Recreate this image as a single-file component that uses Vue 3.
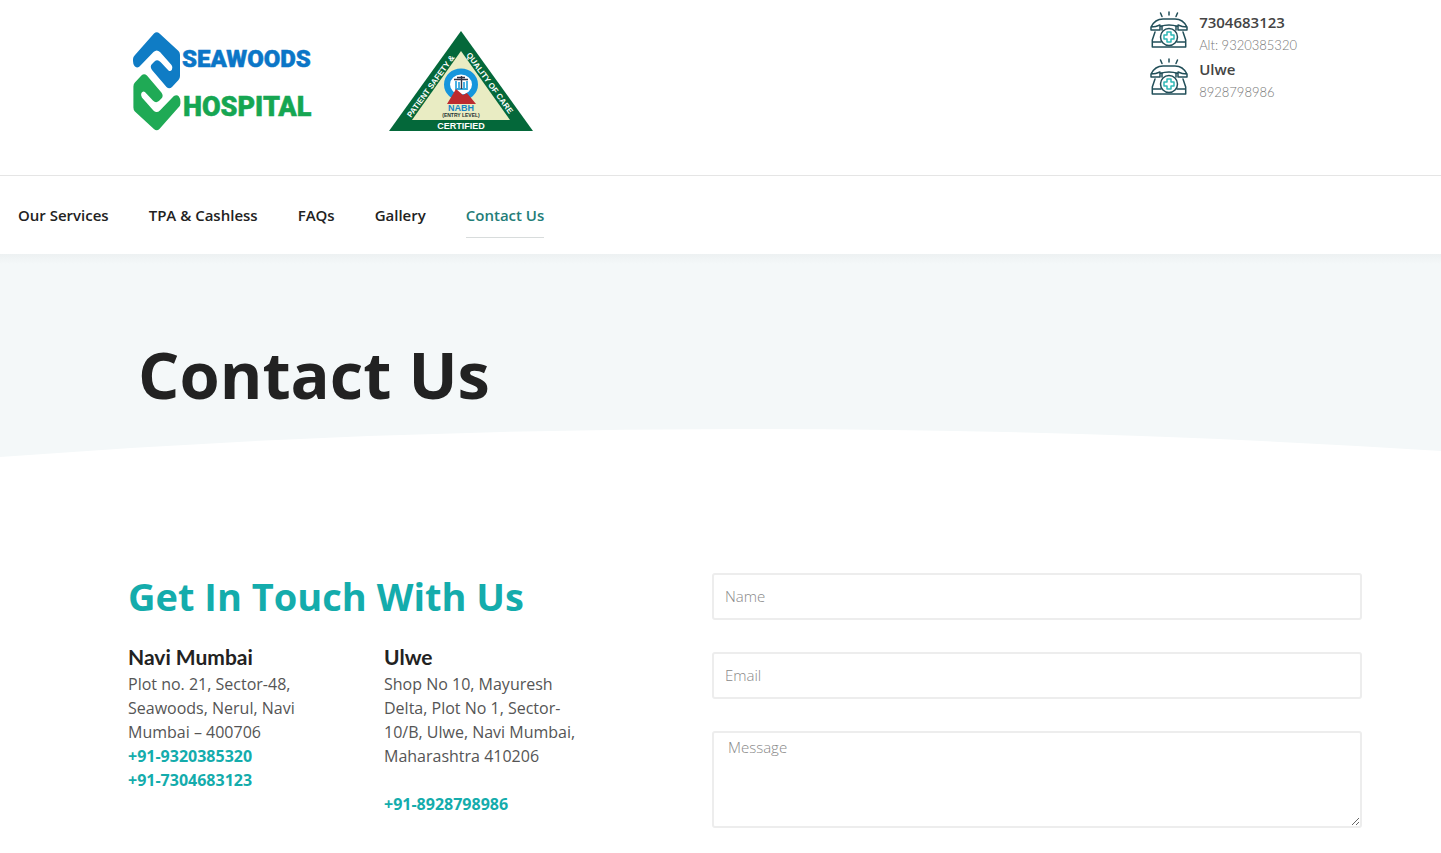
<script setup>
const nav = ['Our Services', 'TPA & Cashless', 'FAQs', 'Gallery', 'Contact Us']
const phones = [
  { title: '7304683123', note: 'Alt: 9320385320' },
  { title: 'Ulwe', note: '8928798986' },
]
const offices = [
  {
    city: 'Navi Mumbai',
    address: 'Plot no. 21, Sector-48, Seawoods, Nerul, Navi Mumbai – 400706',
    numbers: ['+91-9320385320', '+91-7304683123'],
  },
  {
    city: 'Ulwe',
    address: 'Shop No 10, Mayuresh Delta, Plot No 1, Sector-10/B, Ulwe, Navi Mumbai, Maharashtra 410206',
    numbers: ['+91-8928798986'],
    spaced: true,
  },
]
const mark =
  'M1 30 V28 Q1 26 3 24 L22 2.500 Q24.700 0 27.500 2.500 L46.500 20 Q48 21.500 48 24 V45 Q48 47.500 46.500 49 L40 56 Q37.300 58.500 34.500 56 L20 39 Q17.500 35.500 20 33 L22.500 30.500 Q25.500 28 28.500 31 L36.500 39.500 Q38.500 41 40 38.500 Q41 36 39.500 34 L28 21 Q24.700 18 21.500 21 L7.500 35.500 Q4.500 37.500 2.500 35 Q1 33 1 30Z'
</script>

<template>
  <header class="top">
    <div class="logos">
      <a href="#" class="logo" aria-label="Seawoods Hospital">
        <svg width="180" height="102" viewBox="0 0 180 102">
          <path fill="#0f7cc5" :d="mark" />
          <path fill="#1faa55" :d="mark" transform="rotate(180 24.700 50.300)" />
          <text class="wordmark" x="50" y="36" font-size="24" fill="#0b76c7" stroke="#0b76c7">SEAWOODS</text>
          <text class="wordmark" x="51" y="85" font-size="27" fill="#16a652" stroke="#16a652">HOSPITAL</text>
        </svg>
      </a>
      <svg class="nabh" width="144" height="101" viewBox="0 0 144 101" role="img" aria-label="NABH certified">
        <path fill="#04683a" d="M72 0 L144 100 H0Z" />
        <path fill="#e9ecc3" d="M72 20 L121 89 H23Z" />
        <ellipse cx="72" cy="53.500" rx="14" ry="13" fill="#fff" stroke="#1696dc" stroke-width="6" />
        <path d="M67 50 V58 H78 V50 M70 51 V57 M75 51 V57" fill="none" stroke="#38a9df" stroke-width="1.800" />
        <path d="M65 48.500 H79 M68 46.500 H76 M72.500 45 V58" stroke="#334" stroke-width="1.400" />
        <path fill="#bd2b2e" d="M67 58 L74 64 L78 62 L87 73 H58Z" />
        <g class="seal-text">
          <text x="72" y="80" font-size="9" text-anchor="middle" fill="#1686c7">NABH</text>
          <text x="72" y="86" font-size="5" text-anchor="middle" fill="#233">(ENTRY LEVEL)</text>
          <text x="72" y="98" font-size="9" text-anchor="middle" fill="#fff">CERTIFIED</text>
          <text transform="translate(22 87) rotate(-54)" font-size="8" fill="#fff">PATIENT SAFETY &amp;</text>
          <text transform="translate(77 24) rotate(54)" font-size="8" fill="#fff">QUALITY OF CARE</text>
        </g>
      </svg>
    </div>
    <ul class="phones">
      <li v-for="p in phones" :key="p.title">
        <svg width="38" height="38" viewBox="0 0 38 38" fill="none" stroke="#224f59" stroke-width="1.500" stroke-linejoin="round" stroke-linecap="round">
          <path d="M19 1 V4 M10.500 2 L12 5.500 M27.500 2 L26 5.500" />
          <path d="M1 19 V16 Q5 8 13 8 H25 Q33 8 37 16 V19 H28 V15.500 Q19 12.500 10 15.500 V19Z M1 16 Q6 16 10 14 M37 16 Q32 16 28 14" />
          <path d="M5 21 L2.300 29 V36 H35.700 V29 L33 21 M2.300 31 H11 M27 31 H35.700 M12 15 V19 M26 15 V19" />
          <circle cx="19" cy="26" r="8.500" fill="#fff" />
          <path stroke="#2fb8b6" d="M17 21 H21 V24 H24 V28 H21 V31 H17 V28 H14 V24 H17Z" />
        </svg>
        <div>
          <strong>{{ p.title }}</strong>
          <span>{{ p.note }}</span>
        </div>
      </li>
    </ul>
  </header>

  <nav class="nav">
    <a v-for="n in nav" :key="n" href="#" :class="{ active: n === 'Contact Us' }">{{ n }}</a>
  </nav>

  <section class="hero">
    <h1>Contact Us</h1>
    <svg class="curve" viewBox="0 0 1441 30" preserveAspectRatio="none" aria-hidden="true">
      <path fill="#fff" d="M0 29 Q370 1 740 1 Q1100 1 1441 23 V30 H0Z" />
    </svg>
  </section>

  <main class="contact">
    <section>
      <h2>Get In Touch With Us</h2>
      <div class="offices">
        <article v-for="o in offices" :key="o.city">
          <h3>{{ o.city }}</h3>
          <p>{{ o.address }}</p>
          <div class="numbers" :class="{ spaced: o.spaced }">
            <a v-for="t in o.numbers" :key="t" :href="'tel:' + t">{{ t }}</a>
          </div>
        </article>
      </div>
    </section>
    <form @submit.prevent>
      <input type="text" placeholder="Name" aria-label="Name" />
      <input type="email" placeholder="Email" aria-label="Email" />
      <textarea placeholder="Message" aria-label="Message"></textarea>
    </form>
  </main>
</template>

<style>
body {
  background: #fff;
  font-family: "Open Sans", sans-serif;
  overflow-x: hidden;
}
</style>

<style scoped>
.top {
  display: flex;
  justify-content: space-between;
  align-items: flex-start;
  box-sizing: border-box;
  min-height: 176px;
  padding: 11px 144px 0 132px;
  border-bottom: 1px solid #e5e5e5;
}
.logos {
  display: flex;
  gap: 77px;
  padding-top: 20px;
}
.logo {
  display: block;
}
.logo svg,
.nabh {
  display: block;
}
.wordmark {
  font-family: Roboto, sans-serif;
  font-weight: 900;
  stroke-width: 0.5px;
}
.seal-text {
  font-family: "Liberation Sans", sans-serif;
  font-weight: 700;
}
.phones {
  display: grid;
  gap: 3px;
  margin: 0;
  padding: 0;
  list-style: none;
}
.phones li {
  display: flex;
  gap: 11px;
  height: 44px;
}
.phones strong,
.phones span {
  display: block;
}
.phones strong {
  color: #444;
  font-size: 15px;
  font-weight: 600;
  line-height: 22px;
}
.phones span {
  color: #777;
  font-family: Lato, sans-serif;
  font-size: 13px;
  font-weight: 300;
  line-height: 24px;
}
.nav {
  display: flex;
  gap: 40px;
  box-sizing: border-box;
  height: 78px;
  padding: 17px 18px 16px;
}
.nav a {
  border-bottom: 1px solid transparent;
  color: #222;
  font-size: 15px;
  font-weight: 600;
  line-height: 44px;
  text-decoration: none;
}
.nav .active {
  border-color: #d8dcdc;
  color: #237d78;
}
.hero {
  background: linear-gradient(#edf1f2, #f4f8f9 10px);
}
.hero h1 {
  margin: 0;
  padding: 76px 138px 0;
  color: #222;
  font-size: 65px;
  font-weight: 700;
  line-height: 88px;
}
.curve {
  display: block;
  width: 100%;
  height: 30px;
  margin-top: 10px;
}
.contact {
  display: grid;
  grid-template-columns: 584fr 650fr;
  padding: 115px 79px 24px 128px;
}
.contact h2 {
  margin: 0;
  color: #14acac;
  font-size: 38px;
  font-weight: 700;
  line-height: 46px;
}
.offices {
  display: grid;
  grid-template-columns: 200px 200px;
  gap: 56px;
  margin-top: 26px;
}
.offices h3 {
  margin: 0 0 3px;
  color: #222;
  font-family: Lato, sans-serif;
  font-size: 21px;
  font-weight: 700;
  line-height: 24px;
}
.offices p {
  margin: 0;
  color: #555;
  font-size: 16px;
  line-height: 24px;
}
.numbers.spaced {
  margin-top: 24px;
}
.numbers a {
  display: block;
  color: #14acac;
  font-size: 16px;
  font-weight: 700;
  line-height: 24px;
  text-decoration: none;
}
form {
  display: grid;
  align-content: start;
  gap: 32px;
}
input,
textarea {
  box-sizing: border-box;
  width: 100%;
  height: 47px;
  margin: 0;
  padding: 0 11px 2px;
  border: 2px solid #ededed;
  border-radius: 3px;
  background: #fff;
  color: #444;
  font-family: "Open Sans", sans-serif;
  font-size: 15px;
  font-weight: 300;
  line-height: 22px;
}
textarea {
  display: block;
  height: 97px;
  padding: 3px 14px;
  resize: both;
}
::placeholder {
  color: #888;
  opacity: 1;
}
</style>
